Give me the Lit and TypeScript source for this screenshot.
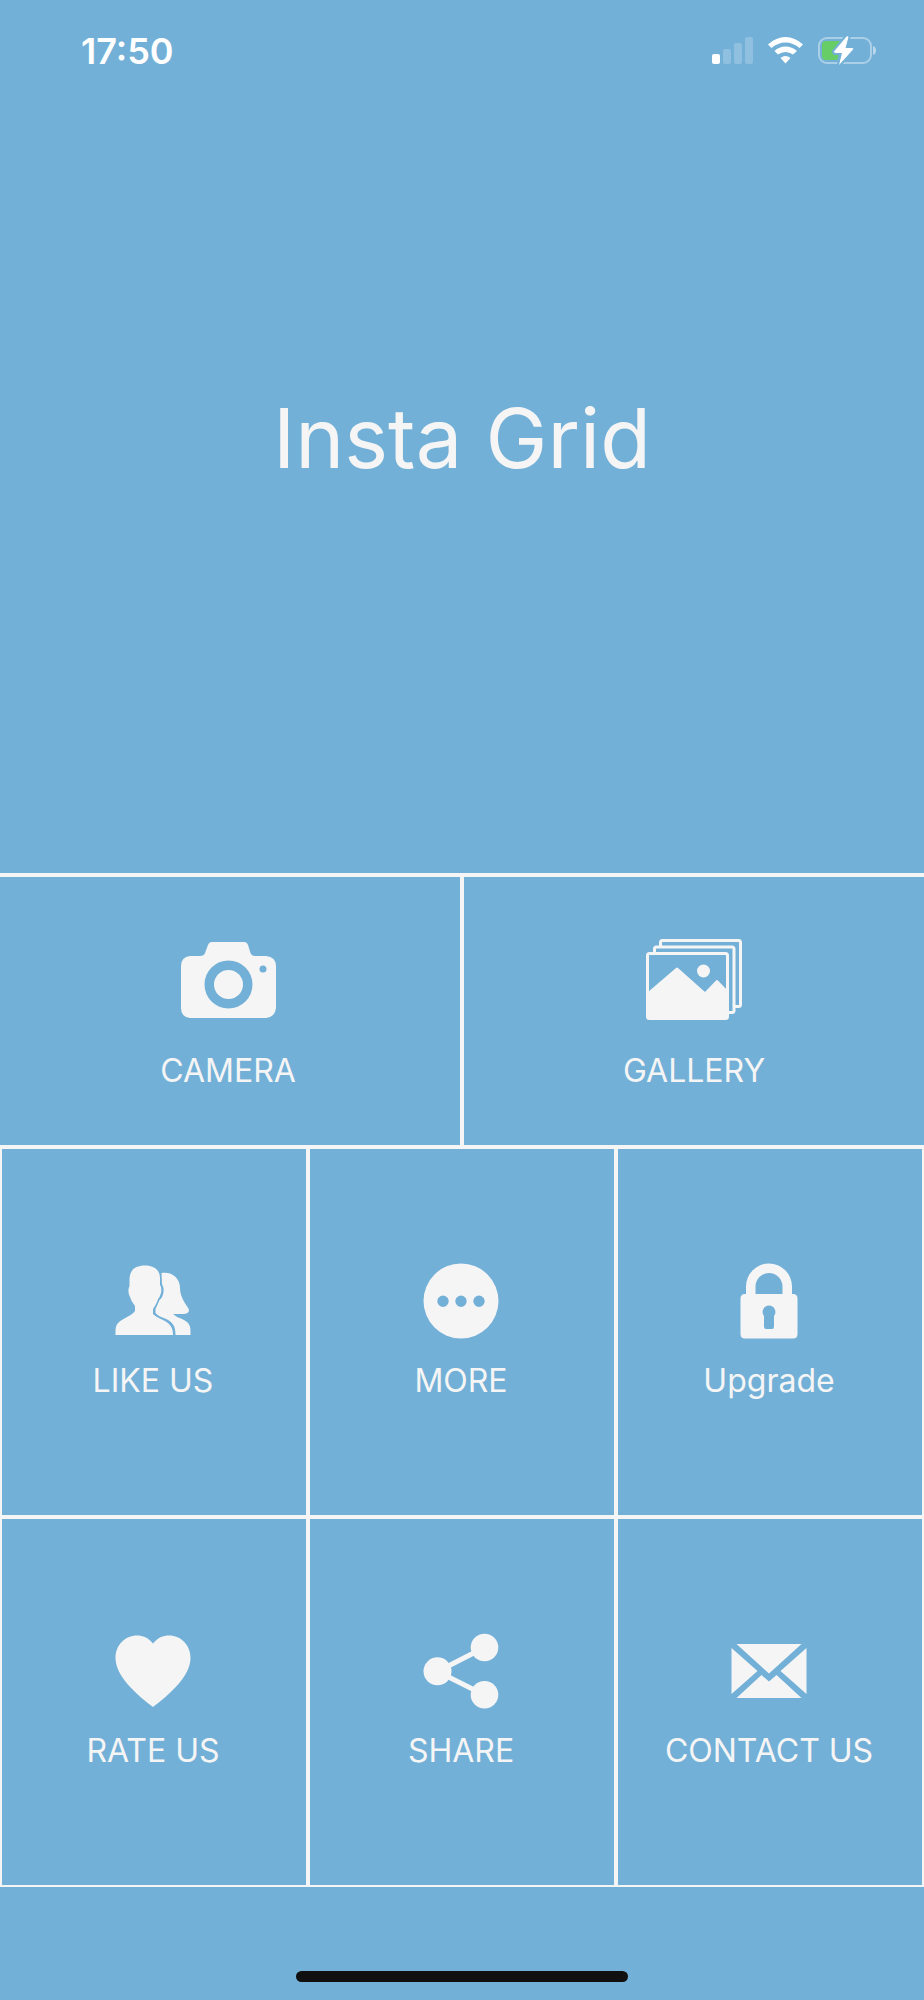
import { LitElement, html, svg, css } from "lit";
import { customElement } from "lit/decorators.js";

const camera = svg`<svg class="icon" width="96" height="78" viewBox="0 0 96 78" aria-hidden="true">
  <path fill-rule="evenodd" d="M10 15H20Q24 15 25 12L28 4Q29 1 32 1H64Q67 1 68 4L70.500 12Q71.500 15 75 15H86Q96 16 96 25V67Q95 76 86 77H10Q1 76 1 67V25Q1 16 10 15ZM48.500 19.500A24 24 0 1 0 48.500 67.500A24 24 0 1 0 48.500 19.500ZM83 24.500A3.500 3.500 0 1 0 83 31.500A3.500 3.500 0 1 0 83 24.500Z"/>
  <circle cx="48.500" cy="43.500" r="14.500"/>
</svg>`;

const gallery = svg`<svg class="icon" width="96" height="82" viewBox="0 0 96 82" aria-hidden="true">
  <g fill="none" stroke="currentColor" stroke-width="3">
    <path d="M14.500 7V3.500Q14.500 1.500 16.500 1.500H92.500Q94.500 1.500 94.500 3.500V65.500Q94.500 67.500 92.500 67.500H88"/>
    <path d="M8.500 14V10Q8.500 8 10.500 8H86Q88 8 88 10V71.500Q88 73.500 86 73.500H82"/>
    <rect x="1.500" y="14.500" width="80" height="65" rx="2"/>
  </g>
  <path d="M2 53L30 29Q31 28 32 29L59 53L70 41.500Q71 40.500 72 41.500L81 51V80H2Z"/>
  <circle cx="57.500" cy="32" r="6.500"/>
</svg>`;

const people = svg`<svg class="icon" width="76" height="76" viewBox="0 0 76 76" aria-hidden="true">
  <path d="M14.500 17C14.500 7 20 2.500 30 2.500C39 2.500 45 7 45 15V22Q47 24 46 30Q45 34 43 36Q42 40 38 46V51Q41 54 48 57C56 61 58 65 58 72H.5V68C.5 60 5 58 12 54Q18 51 20 48V43Q16 38 15 34Q12 28 14.500 23Z"/>
  <path d="M46.500 10C57 8.500 65 15 65 25C65 36 73 43 74 47Q74 51 68 51H58Q61 54 67 56C74 59 75.500 63 75.500 68V72H60.500C60.500 63 58 59 50 55.500Q43 53 40.500 50V46Q42 43 44.500 37Q48 34 48.500 29Q49 24 47 21Z"/>
</svg>`;

const more = svg`<svg class="icon" width="76" height="76" viewBox="0 0 76 76" aria-hidden="true">
  <path fill-rule="evenodd" d="M38 .5A37.500 37.500 0 1 0 38 75.500A37.500 37.500 0 1 0 38 .5ZM20 32.500A5.700 5.700 0 1 1 20 43.900A5.700 5.700 0 1 1 20 32.500ZM38 32.500A5.700 5.700 0 1 1 38 43.900A5.700 5.700 0 1 1 38 32.500ZM56 32.500A5.700 5.700 0 1 1 56 43.900A5.700 5.700 0 1 1 56 32.500Z"/>
</svg>`;

const lock = svg`<svg class="icon" width="76" height="76" viewBox="0 0 76 76" aria-hidden="true">
  <path fill-rule="evenodd" d="M15 31V23.500A23 23 0 0 1 61 23.500V31H62Q66.500 31 66.500 35.500V71Q66.500 75.500 62 75.500H14Q9.500 75.500 9.500 71V35.500Q9.500 31 14 31ZM24.500 31H51.500V23.500A13.500 13.500 0 0 0 24.500 23.500ZM38 42.500A6.500 6.500 0 0 0 33 53V63.500Q33 66 35 66H41Q43 66 43 63.500V53A6.500 6.500 0 0 0 38 42.500Z"/>
</svg>`;

const heart = svg`<svg class="icon" width="76" height="76" viewBox="0 0 76 76" aria-hidden="true">
  <path d="M38 10.500C43 4.500 48 2.500 54 2.500C66 2.500 75.500 12 75.500 25C75.500 43 55 61 38 74C21 61 .5 43 .5 25C.5 12 10 2.500 22 2.500C28 2.500 33 4.500 38 10.500Z"/>
</svg>`;

const share = svg`<svg class="icon" width="76" height="76" viewBox="0 0 76 76" aria-hidden="true">
  <path fill="none" stroke="currentColor" stroke-width="5" d="M61.500 14.500L14.500 38.500L61.500 62"/>
  <circle cx="14.500" cy="38.300" r="14"/><circle cx="61.500" cy="14.500" r="13.800"/><circle cx="61.500" cy="61.800" r="13.800"/>
</svg>`;

const mail = svg`<svg class="icon" width="76" height="76" viewBox="0 0 76 76" aria-hidden="true">
  <path d="M5.500 11H70.500L38 40.500ZM.5 15L26.500 38L.5 61ZM75.500 15L49.500 38L75.500 61ZM5.500 65L30.500 42L38 48.500L45.500 42L70.500 65Z"/>
</svg>`;

const sources = [
  { label: "CAMERA", icon: camera },
  { label: "GALLERY", icon: gallery },
];
const actions = [
  { label: "LIKE US", icon: people },
  { label: "MORE", icon: more },
  { label: "Upgrade", icon: lock },
  { label: "RATE US", icon: heart },
  { label: "SHARE", icon: share },
  { label: "CONTACT US", icon: mail },
];

const tile = (t: { label: string; icon: unknown }) =>
  html`<button class="tile" type="button">${t.icon}<span class="label">${t.label}</span></button>`;

@customElement("app-root")
export class AppRoot extends LitElement {
  static styles = css`
    :host {
      display: flex;
      flex-direction: column;
      min-height: 100vh;
      background: #73b0d7;
      color: #f5f5f5;
      font-family: Inter, "Liberation Sans", sans-serif;
    }
    * { box-sizing: border-box; }
    .status {
      display: flex;
      justify-content: space-between;
      align-items: center;
      height: 102px;
      padding: 0 47px 0 81px;
      color: #fff;
    }
    .time { font-size: 36px; line-height: 40px; font-weight: 600; }
    .indicators { display: block; }
    .hero {
      flex: 1;
      display: flex;
      align-items: center;
      justify-content: center;
      padding-bottom: 100px;
    }
    .title { margin: 0; font-size: 83px; line-height: 104px; font-weight: 400; }
    .sources {
      display: grid;
      grid-template-columns: repeat(2, 1fr);
      gap: 4px;
      padding: 4px 0;
      background: #f5f5f5;
    }
    .actions {
      display: grid;
      grid-template-columns: repeat(3, 1fr);
      gap: 4px;
      padding: 0 2px 2px;
      background: #f5f5f5;
    }
    .tile {
      display: flex;
      flex-direction: column;
      align-items: center;
      justify-content: center;
      min-width: 0;
      margin: 0;
      border: 0;
      background: #73b0d7;
      color: inherit;
      font: inherit;
      cursor: pointer;
    }
    .sources .tile { height: 268px; gap: 30px; padding: 8px 0 0; }
    .sources .tile:first-child { padding-right: 4px; }
    .actions .tile { height: 366px; gap: 22px; padding: 0 2px 0 0; }
    .icon { display: block; fill: currentColor; }
    .sources .icon { height: 82px; }
    .label { font-size: 32px; line-height: 40px; font-weight: 400; }
    .footer {
      display: flex;
      justify-content: center;
      align-items: flex-end;
      height: 113px;
      padding-bottom: 18px;
    }
    .home { width: 36%; height: 11px; border-radius: 6px; background: #101010; }
  `;

  render() {
    return html`
      <header class="status">
        <span class="time">17:50</span>
        <svg class="indicators" width="166" height="30" viewBox="0 0 166 30" role="img" aria-label="Signal, Wi-Fi, charging">
          <g fill="#fff">
            <rect x="1" y="18" width="8" height="10" rx="2"/>
            <g opacity=".2">
              <rect x="12" y="13" width="8" height="15" rx="2"/>
              <rect x="23" y="7" width="8" height="21" rx="2"/>
              <rect x="34" y="1" width="8" height="27" rx="2"/>
            </g>
            <path d="M57 8.500Q65 1 74.500 1Q84 1 92 8.500L88.500 12Q82 6.500 74.500 6.500Q67 6.500 60.500 12ZM63.500 15Q68 10.500 74.500 10.500Q81 10.500 86 15L82 18.500Q78.500 16 74.500 16Q70.500 16 67 18.500ZM69.500 22Q74.500 18 79.500 22L74.500 27.500Z"/>
          </g>
          <rect x="108" y="2" width="52" height="25" rx="8" fill="none" stroke="#fff" stroke-opacity=".4" stroke-width="2"/>
          <path d="M162 10Q165 11 165 14.500Q165 18 162 19Z" fill="#fff" fill-opacity=".5"/>
          <path d="M115 5H133L125 15Q124 18 128 18L126 24H115Q111 24 111 20V9Q111 5 115 5Z" fill="#67ce67"/>
          <path d="M136 0L123 15.500Q123 17 125 17H131L128 29L142 13.500Q143 12 141 12H134.500L137.500 1Z" fill="#fff" stroke="#73b0d7" stroke-width="4" paint-order="stroke"/>
        </svg>
      </header>
      <div class="hero"><h1 class="title">Insta Grid</h1></div>
      <nav class="sources">${sources.map(tile)}</nav>
      <nav class="actions">${actions.map(tile)}</nav>
      <footer class="footer"><div class="home"></div></footer>
    `;
  }
}
